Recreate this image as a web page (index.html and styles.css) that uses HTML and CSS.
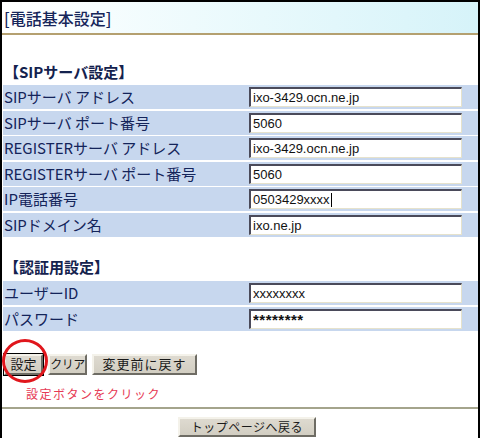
FILE: index.html
```html
<!DOCTYPE html>
<html lang="ja">
<head>
<meta charset="utf-8">
<title>電話基本設定</title>
<link rel="stylesheet" href="styles.css">
</head>
<body>
<div class="page">
  <div class="header">[電話基本設定]</div>
  <div class="tan-line"></div>

  <h2 class="section-title first">【SIPサーバ設定】</h2>
  <div class="rows">
    <div class="row"><span class="label">SIPサーバ アドレス</span><input class="field" type="text" value="ixo-3429.ocn.ne.jp"></div>
    <div class="row"><span class="label">SIPサーバ ポート番号</span><input class="field" type="text" value="5060"></div>
    <div class="row"><span class="label">REGISTERサーバ アドレス</span><input class="field" type="text" value="ixo-3429.ocn.ne.jp"></div>
    <div class="row"><span class="label">REGISTERサーバ ポート番号</span><input class="field" type="text" value="5060"></div>
    <div class="row"><span class="label">IP電話番号</span><div class="field fake">0503429xxxx<span class="caret"></span></div></div>
    <div class="row"><span class="label">SIPドメイン名</span><input class="field" type="text" value="ixo.ne.jp"></div>
  </div>

  <h2 class="section-title second">【認証用設定】</h2>
  <div class="rows">
    <div class="row"><span class="label">ユーザーID</span><input class="field" type="text" value="xxxxxxxx"></div>
    <div class="row"><span class="label">パスワード</span><input class="field pw" type="text" value="********"></div>
  </div>

  <div class="actions">
    <button class="btn btn-default" type="button">設定</button>
    <button class="btn btn-small" type="button">クリア</button>
    <button class="btn btn-wide" type="button">変更前に戻す</button>
    <span class="ring"></span>
  </div>
  <div class="hint">設定ボタンをクリック</div>
  <div class="gray-line"></div>
  <div class="bottom">
    <button class="btn btn-top" type="button">トップページへ戻る</button>
  </div>
</div>
</body>
</html>
```

FILE: styles.css
```css
html, body {
  margin: 0;
  padding: 0;
  background: #ffffff;
}

.page {
  box-sizing: border-box;
  width: 480px;
  height: 438px;
  border: 2px solid #000000;
  border-bottom: none;
  font-family: "Noto Sans CJK JP", "DejaVu Sans", sans-serif;
  color: #15255a;
  overflow: hidden;
}

.header {
  height: 31px;
  display: flex;
  align-items: center;
  padding-left: 2px;
  font-size: 16px;
  font-weight: 500;
  color: #16265a;
  background: linear-gradient(to right, #ffffff 0%, #eefbfd 40%, #d6f3f9 100%);
}

.tan-line {
  height: 2px;
  background: #b4a070;
}

.section-title {
  margin: 0;
  height: 20px;
  line-height: 20px;
  padding-left: 2px;
  font-size: 15px;
  font-weight: bold;
  color: #14224e;
}

.section-title.first {
  margin-top: 27px;
  margin-bottom: 3px;
}

.section-title.second {
  margin-top: 20px;
  margin-bottom: 4px;
}

.rows {
  display: flex;
  flex-direction: column;
  gap: 1.6px;
  padding-left: 1px;
}

.row {
  display: grid;
  grid-template-columns: 246px 213px;
  align-items: center;
  height: 24px;
  background: #c7d7ee;
}

.label {
  font-size: 15px;
  line-height: 24px;
  padding-left: 1px;
  color: #14245a;
  white-space: nowrap;
}

.field {
  box-sizing: border-box;
  width: 213px;
  height: 20px;
  margin: 0;
  padding: 0 0 0 2px;
  border-top: 2px solid #4a4a5a;
  border-left: 2px solid #4a4a5a;
  border-right: 1px solid #e6e2cc;
  border-bottom: 1px solid #e6e2cc;
  background: #ffffff;
  font-family: "Liberation Sans", "DejaVu Sans", sans-serif;
  font-size: 13px;
  color: #111111;
  outline: none;
}

.field.fake {
  display: flex;
  align-items: center;
  line-height: 17px;
}

.caret {
  display: inline-block;
  width: 1px;
  height: 14px;
  background: #000000;
  margin-left: 1px;
}

.field.pw {
  font-size: 15px;
  font-weight: bold;
  letter-spacing: 0.5px;
}

.actions {
  position: relative;
  display: flex;
  align-items: center;
  gap: 5px;
  margin-top: 23px;
  padding-left: 2px;
  height: 21px;
}

.btn {
  box-sizing: border-box;
  height: 21px;
  margin: 0;
  padding: 0;
  font-family: "Noto Sans CJK JP", "DejaVu Sans", sans-serif;
  font-size: 12px;
  line-height: 16px;
  white-space: nowrap;
  color: #1a1a1a;
  background: linear-gradient(to bottom, #dedad0, #d2cec2);
  border-top: 2px solid #f4f2ea;
  border-left: 2px solid #f4f2ea;
  border-right: 2px solid #6e6c64;
  border-bottom: 2px solid #6e6c64;
  cursor: pointer;
}

.btn-default {
  width: 39px;
  outline: 1px solid #000000;
  font-size: 13px;
}

.btn-small {
  width: 39px;
  font-size: 12px;
  letter-spacing: -0.5px;
}

.btn-wide {
  width: 105px;
  font-size: 13px;
  letter-spacing: 1px;
}

.ring {
  position: absolute;
  box-sizing: border-box;
  left: 0;
  top: -15px;
  width: 46px;
  height: 44px;
  border: 3px solid #e0161c;
  border-radius: 50%;
  pointer-events: none;
}

.hint {
  margin-top: 12px;
  padding-left: 24px;
  font-size: 12px;
  line-height: 14px;
  letter-spacing: 1.5px;
  color: #e63a55;
}

.gray-line {
  margin-top: 6px;
  height: 2px;
  background: #a4a48c;
  margin-left: -2px;
  margin-right: -2px;
}

.bottom {
  display: flex;
  padding-left: 176px;
  margin-top: 8px;
}

.btn-top {
  width: 138px;
  height: 20px;
  font-size: 12px;
  letter-spacing: 0.5px;
}
```
